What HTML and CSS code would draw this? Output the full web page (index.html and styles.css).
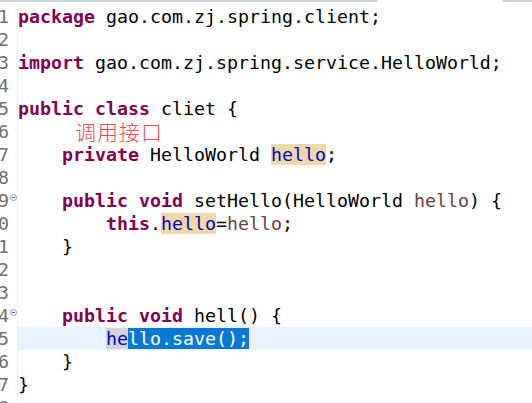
FILE: index.html
```html
<!DOCTYPE html>
<html lang="zh">
<head>
  <meta charset="UTF-8" />
  <title>cliet.java</title>
  <link rel="stylesheet" href="styles.css">
</head>
<body>
  <div class="tabs">
    <span class="tab-line first"></span>
    <span class="tab-gap"></span>
    <span class="tab-line last"></span>
  </div>

  <div class="editor">
    <div class="line"><span class="num">1</span><span class="fold"></span><span class="code"><b class="kw">package</b> gao.com.zj.spring.client;</span></div>
    <div class="line"><span class="num">2</span><span class="fold"></span><span class="code"></span></div>
    <div class="line"><span class="num">3</span><span class="fold"></span><span class="code"><b class="kw">import</b> gao.com.zj.spring.service.HelloWorld;</span></div>
    <div class="line"><span class="num">4</span><span class="fold"></span><span class="code"></span></div>
    <div class="line"><span class="num">5</span><span class="fold"></span><span class="code"><b class="kw">public</b> <b class="kw">class</b> cliet {</span></div>
    <div class="line"><span class="num">6</span><span class="fold"></span><span class="code"><span class="note">调用接口</span></span></div>
    <div class="line"><span class="num">7</span><span class="fold"></span><span class="code">    <b class="kw">private</b> HelloWorld <span class="field occur">hello</span>;</span></div>
    <div class="line"><span class="num">8</span><span class="fold"></span><span class="code"></span></div>
    <div class="line"><span class="num">9</span><span class="fold"><svg width="7" height="7" viewBox="0 0 7 7"><circle cx="3.5" cy="3.5" r="3" fill="#fff" stroke="#8c9bb4" stroke-width="1"/><path d="M1.8 3.5h3.4" stroke="#5d6f8e" stroke-width="1"/></svg></span><span class="code">    <b class="kw">public</b> <b class="kw">void</b> setHello(HelloWorld <span class="local">hello</span>) {</span></div>
    <div class="line"><span class="num">10</span><span class="fold"></span><span class="code">        <b class="kw">this</b>.<span class="field occur">hello</span>=<span class="local">hello</span>;</span></div>
    <div class="line"><span class="num">11</span><span class="fold"></span><span class="code">    }</span></div>
    <div class="line"><span class="num">12</span><span class="fold"></span><span class="code"></span></div>
    <div class="line"><span class="num">13</span><span class="fold"></span><span class="code"></span></div>
    <div class="line"><span class="num">14</span><span class="fold"><svg width="7" height="7" viewBox="0 0 7 7"><circle cx="3.5" cy="3.5" r="3" fill="#fff" stroke="#8c9bb4" stroke-width="1"/><path d="M1.8 3.5h3.4" stroke="#5d6f8e" stroke-width="1"/></svg></span><span class="code">    <b class="kw">public</b> <b class="kw">void</b> hell() {</span></div>
    <div class="line current"><span class="num">15</span><span class="fold"></span><span class="code">        <span class="field read">he</span><span class="selected">llo.save();</span></span></div>
    <div class="line"><span class="num">16</span><span class="fold"></span><span class="code">    }</span></div>
    <div class="line"><span class="num">17</span><span class="fold"></span><span class="code">}</span></div>
    <div class="line"><span class="num">18</span><span class="fold"></span><span class="code"></span></div>
  </div>
</body>
</html>
```

FILE: styles.css
```css
body {
  margin: 0;
  background-color: #fff;
  overflow: hidden;
  font-family: "DejaVu Sans Mono", monospace;
}

.tabs {
  display: flex;
  height: 2px;
  margin-bottom: 3px;
}

.tab-line {
  background-color: #cfd3da;
}

.tab-line.first {
  width: 378px;
  border-radius: 0 0 2px 0;
}

.tab-gap {
  width: 124px;
}

.tab-line.last {
  flex: 1;
  border-radius: 0 0 0 2px;
}

.editor {
  margin-left: -20px;
}

.line {
  display: flex;
  height: 23px;
  line-height: 23px;
  font-size: 18.27px;
}

.num {
  width: 29px;
  text-align: right;
  color: #6f6f6f;
  flex-shrink: 0;
}

.fold {
  width: 8px;
  flex-shrink: 0;
  display: flex;
  align-items: center;
  justify-content: center;
  border-right: 1px solid #eef0f2;
}

.fold svg {
  display: block;
  margin-top: -6px;
}

.code {
  flex: 1;
  white-space: pre;
  color: #000;
  padding-left: 0;
}

.kw {
  color: #7f0055;
  font-weight: bold;
}

.field {
  color: #0000c0;
}

.local {
  color: #6a3e3e;
}

.occur {
  background-color: #f0d8a8;
}

.read {
  background-color: #d4d4d4;
}

.current .code {
  background-color: #e8f2fe;
}

.selected {
  background-color: #0a78d7;
  color: #fff;
}

.note {
  margin-left: 57px;
  font-family: "Noto Sans CJK SC", sans-serif;
  font-weight: 300;
  font-size: 21px;
  color: #e34a55;
  letter-spacing: 1px;
}
```
